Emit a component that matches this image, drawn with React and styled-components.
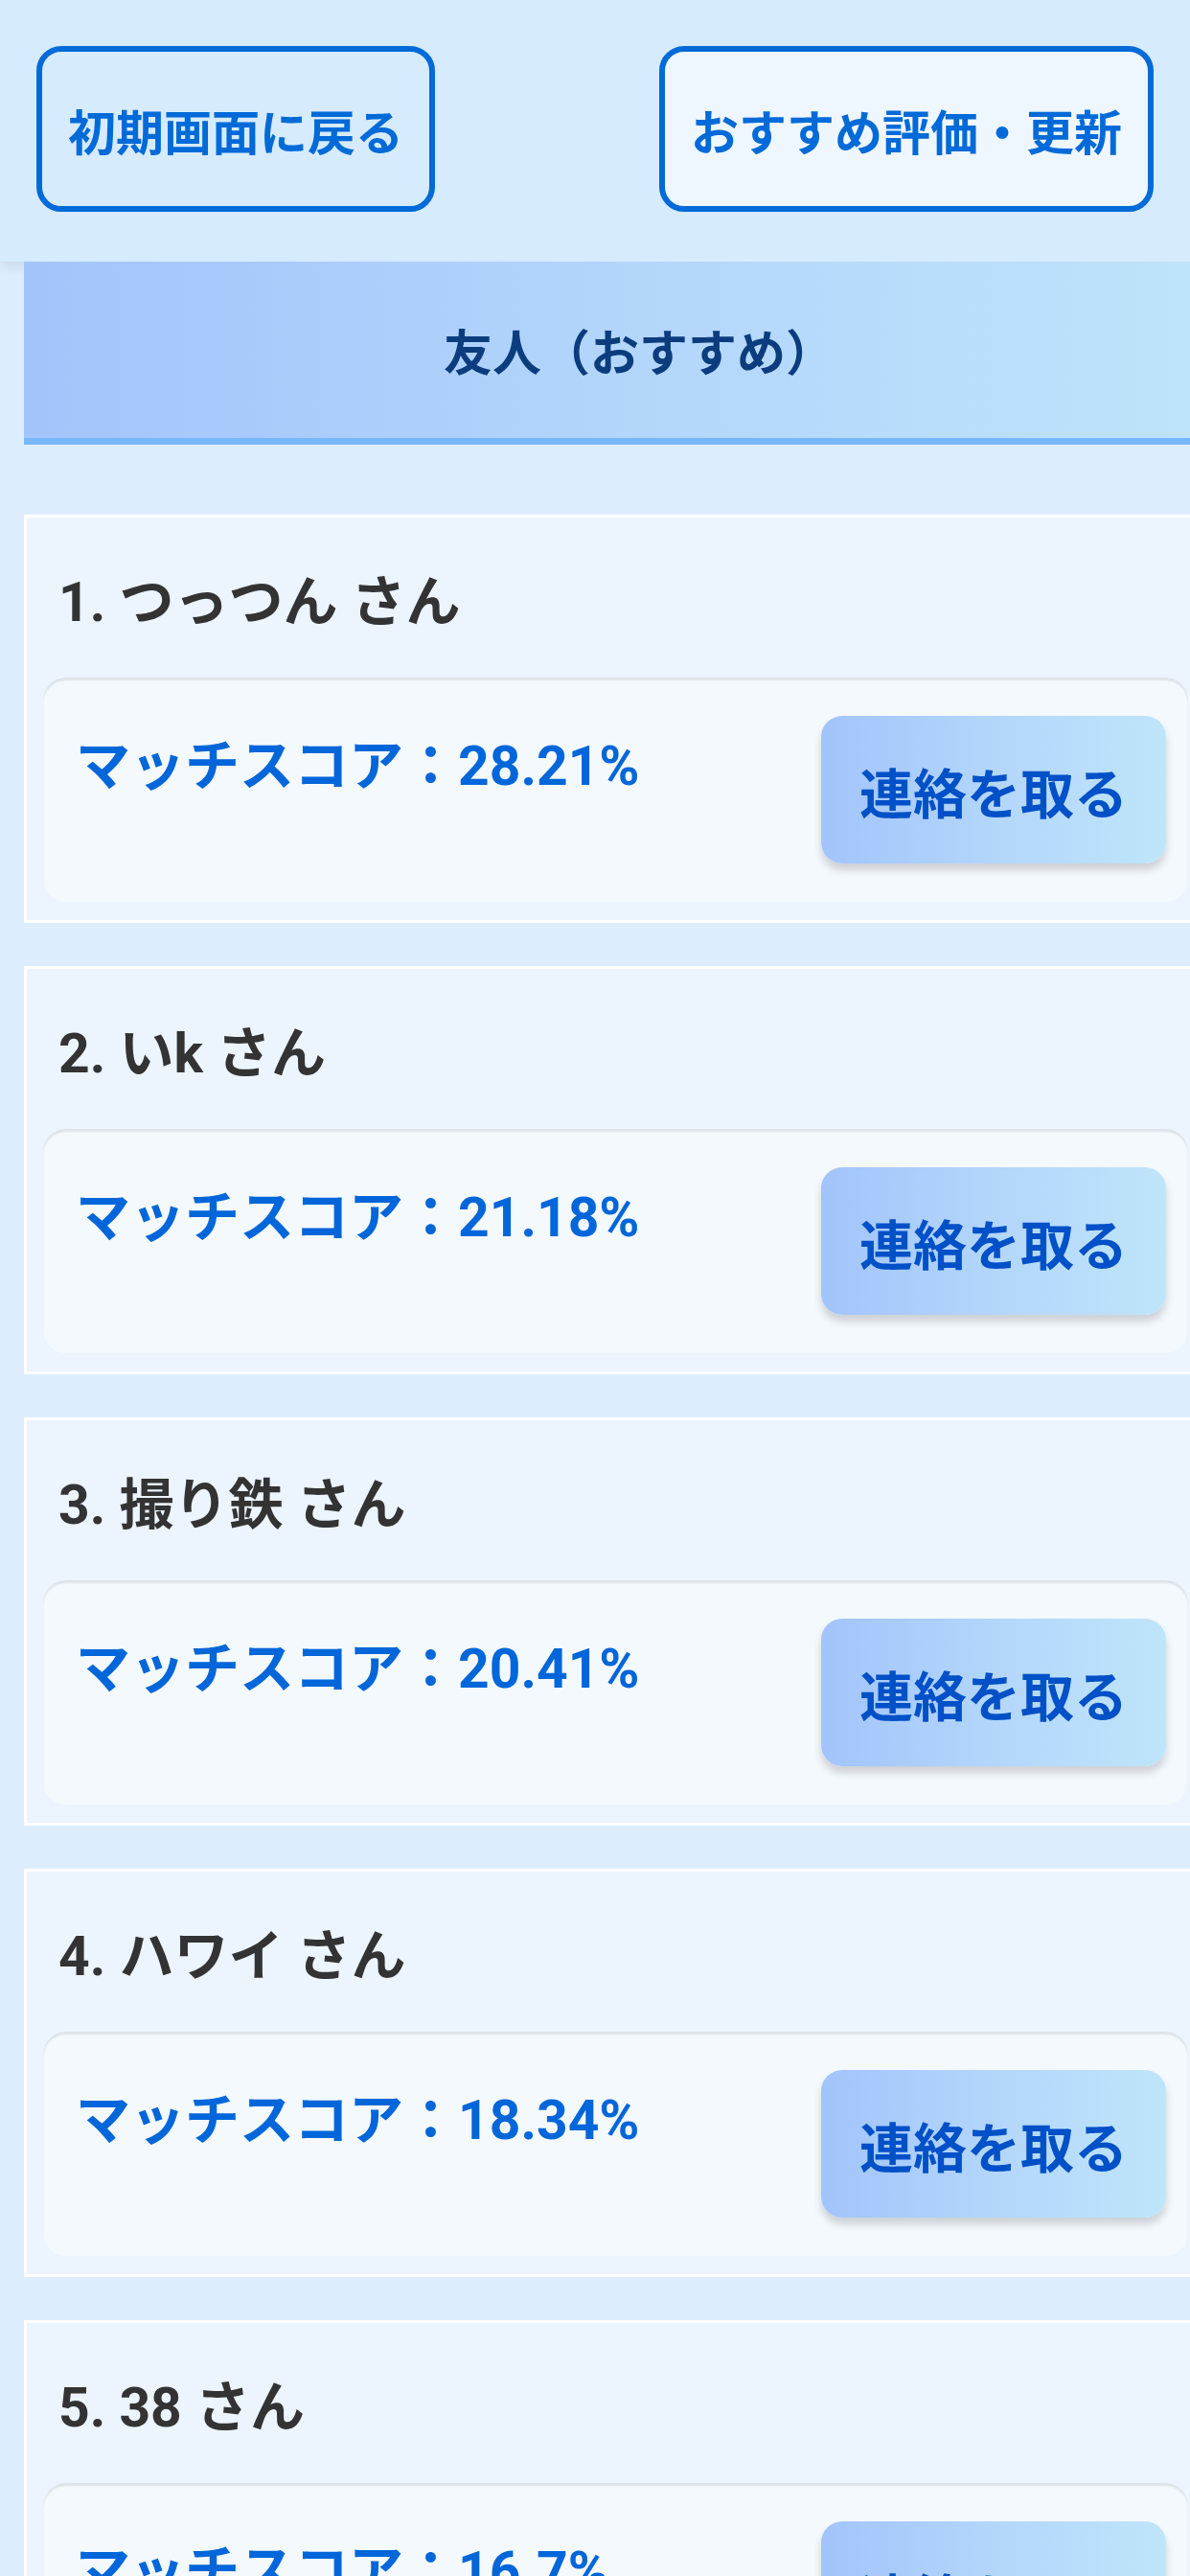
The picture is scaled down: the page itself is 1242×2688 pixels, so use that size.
import React from "react"
import styled, { createGlobalStyle } from "styled-components"

const GlobalStyle = createGlobalStyle`
  html, body {
    margin: 0;
    padding: 0;
    background: #deedfe;
    overflow-x: hidden;
  }
  body {
    font-family: Roboto, "Noto Sans CJK JP", sans-serif;
  }
  * { box-sizing: border-box; }
`

const Page = styled.div`
  width: 1242px;
  height: 2688px;
  background: #deedfe;
  overflow: hidden;
`

const TopBar = styled.div`
  display: flex;
  justify-content: space-between;
  align-items: center;
  height: 273px;
  padding: 0 38px 4px;
  background: #d6ebfd;
  box-shadow: 0 4px 12px rgba(0, 0, 0, 0.1);
`

const TopButton = styled.button`
  height: 173px;
  padding: 0 27px;
  border: 6px solid #006ad8;
  border-radius: 26px;
  background: ${p => (p.$light ? "#eef6ff" : "#d6ebfd")};
  color: #006ad8;
  font-family: inherit;
  font-size: 50px;
  font-weight: 700;
  white-space: nowrap;
`

const ListArea = styled.div`
  padding-left: 25px;
`

const SectionHeader = styled.div`
  display: flex;
  align-items: center;
  justify-content: center;
  width: 1284px;
  height: 191px;
  background: linear-gradient(90deg, #a2c4fb 0%, #b3d6fb 50%, #bfe5fa 100%);
  border-bottom: 7px solid #78b7f9;
  color: #0b3d7e;
  font-size: 51px;
  font-weight: 700;
`

const Cards = styled.div`
  display: flex;
  flex-direction: column;
  gap: 45px;
  padding-top: 73px;
`

const Card = styled.div`
  width: 1235px;
  padding: 0 17px 19px;
  background: #ecf4fe;
  border: 3px solid #ffffff;
`

const Name = styled.h3`
  margin: 54px 0 43px 16px;
  height: 70px;
  line-height: 70px;
  font-size: 57px;
  font-weight: 700;
  color: #333333;
`

const MatchBox = styled.div`
  display: flex;
  justify-content: space-between;
  align-items: center;
  height: 234px;
  padding: 0 23px 0 34px;
  background: #f4f9fe;
  border-radius: 24px;
  box-shadow: inset 0 3px 2px rgba(0, 0, 0, 0.09);
`

const Score = styled.p`
  align-self: flex-start;
  margin: 59px 0 0;
  line-height: 67px;
  font-size: 57px;
  font-weight: 700;
  color: #0066d9;
`

const ContactButton = styled.button`
  height: 154px;
  padding: 0 40px;
  border: none;
  border-radius: 22px;
  background: linear-gradient(90deg, #a2c4fb 0%, #b3d6fb 50%, #bfe5fa 100%);
  box-shadow: 0 7px 9px rgba(0, 0, 0, 0.16);
  color: #0050c8;
  font-family: inherit;
  font-size: 56px;
  font-weight: 700;
  white-space: nowrap;
`

const friends = [
  { name: "つっつん", score: "28.21" },
  { name: "いk", score: "21.18" },
  { name: "撮り鉄", score: "20.41" },
  { name: "ハワイ", score: "18.34" },
  { name: "38", score: "16.7" },
]

export default function App() {
  return (
    <Page>
      <GlobalStyle />
      <TopBar>
        <TopButton>初期画面に戻る</TopButton>
        <TopButton $light>おすすめ評価・更新</TopButton>
      </TopBar>
      <ListArea>
        <SectionHeader>友人（おすすめ）</SectionHeader>
        <Cards>
          {friends.map((f, i) => (
            <Card key={i}>
              <Name>{i + 1}. {f.name} さん</Name>
              <MatchBox>
                <Score>マッチスコア：{f.score}%</Score>
                <ContactButton>連絡を取る</ContactButton>
              </MatchBox>
            </Card>
          ))}
        </Cards>
      </ListArea>
    </Page>
  )
}
